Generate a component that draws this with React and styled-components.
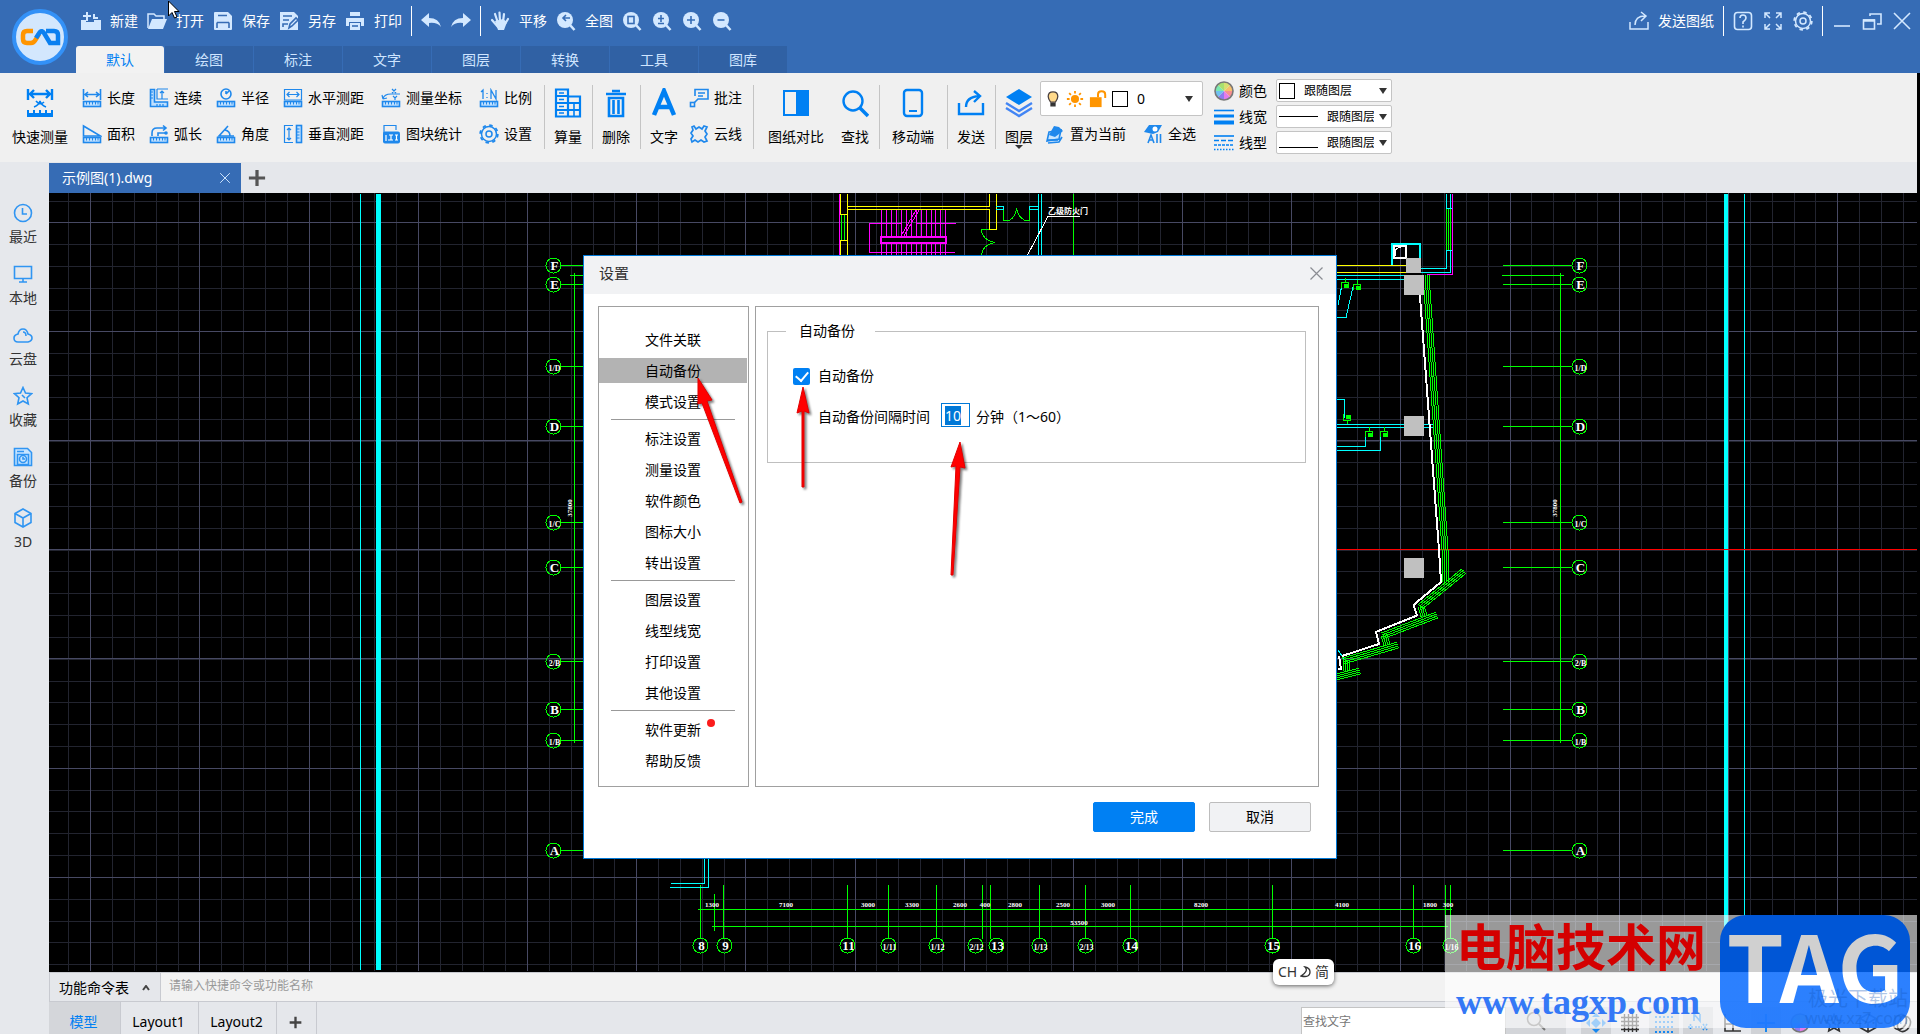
import React, { useEffect, useRef } from "react";
import styled, { createGlobalStyle } from "styled-components";

const GlobalStyle = createGlobalStyle`
  * { box-sizing: border-box; }
  body {
    margin: 0;
    overflow: hidden;
    font-family: "Noto Sans", "Noto Sans CJK SC", sans-serif;
    font-size: 14px;
    line-height: 20px;
    color: #000;
  }
  button, input, select { font: inherit; color: inherit; margin: 0; }
`;

/* ---------- icons ---------- */

const ruler = (
  <>
    <rect x="1.5" y="13.5" width="17" height="5" fill="#bfe0ff" />
    <path d="M4.5 14v2.5M7.5 14v2.5M10.5 14v2.5M13.5 14v2.5M16 14v2.5" strokeWidth="1" />
  </>
);

const lens = <><circle cx="9" cy="9" r="8" fill="currentColor" stroke="none" /><path d="M14 14l4.5 5" strokeWidth="2.6" /></>;

const icons = {
  create: <><path d="M0 9h5v2h8V9h7v10H0z" fill="currentColor" stroke="none" /><path d="M6 1v9M2 5h8M13 3v4h4" strokeWidth="2" /></>,
  open: <><path d="M1 17V3h6l2 2h8v3" strokeWidth="1.5" /><path d="M5 8h15l-4 10H1z" fill="currentColor" stroke="none" /></>,
  save: <><path d="M1 2q0-1 1-1h13l4 4v13q0 1-1 1H2q-1 0-1-1z" fill="currentColor" stroke="none" /><path d="M5 4.5h9M4 11.5h12M4 17v-5.5M16 17v-5.5" stroke="#366cb5" /></>,
  saveAs: <><path d="M1 1h14l4 4v14H1z" fill="currentColor" stroke="none" /><path d="M4 5h9M4 9h6M4 16v-3h5M10 17l1-4 6-6 2 2-6 6z" stroke="#366cb5" /></>,
  print: <><path d="M5 1h10v4H5zM1 7h18v8h-3v-4H4v4H1zM5 12h10v7H5z" fill="currentColor" stroke="none" /><path d="M7 15h6" stroke="#366cb5" /></>,
  undo: <path d="M0 9l8-7v5q10 0 12 9-4-5-12-4v4z" fill="currentColor" stroke="none" />,
  redo: <path d="M20 9l-8-7v5Q2 7 0 16q4-5 12-4v4z" fill="currentColor" stroke="none" />,
  hand: <><path d="M5 10l8-2 4 3-3 8H8z" fill="currentColor" stroke="none" /><path d="M2 9l6 7M5 3l3 9M9.5 1.5l.5 9M14 3l-1 8M18 8l-3 5" strokeWidth="2.2" strokeLinecap="round" /></>,
  full: <>{lens}<path d="M14 7H7M10 4L7 7l3 3" stroke="#366cb5" /></>,
  zoomBox: <>{lens}<rect x="6" y="5.5" width="6" height="7" stroke="#366cb5" /></>,
  zoomFit: <>{lens}<path d="M9 4v7M6 7.5h6M6 12.5h6" stroke="#366cb5" /></>,
  zoomIn: <>{lens}<path d="M9 5v8M5 9h8" stroke="#366cb5" /></>,
  zoomOut: <>{lens}<path d="M5.5 9h7" stroke="#366cb5" /></>,
  share: <path d="M1 11v7h18v-7M6 14q0-9 10-9M12 1l5 4-5 5" strokeWidth="1.5" />,
  help: <><rect x="1.5" y="1.5" width="17" height="17" rx="3" /><path d="M7 7q0-3 3-3t3 3q0 2-3 4v2M10 14.5v2" /></>,
  expand: <path d="M7 2H2v5M2 2l5 5M13 2h5v5M18 2l-5 5M7 18H2v-5M2 18l5-5M13 18h5v-5M18 18l-5-5" strokeWidth="1.5" />,
  gear: <><circle cx="10" cy="10" r="7.5" strokeWidth="1.5" /><circle cx="10" cy="10" r="8.8" strokeWidth="1.8" strokeDasharray="3.45 3.46" /><circle cx="10" cy="10" r="3" strokeWidth="1.5" /></>,
  minimize: <path d="M2 15h16" />,
  restore: <><path d="M1.5 9h11v9h-11z" /><path d="M1 9.5h12" strokeWidth="2.5" /><path d="M8 5V3h11v10h-4" /></>,
  close: <path d="M2 2l16 16M18 2L2 18" />,
  length: <>{ruler}<path d="M1.5 1v11M18.5 1v11M3 6.5h14M6 4L3 6.5 6 9M14 4l3 2.5L14 9" /></>,
  area: <>{ruler}<path d="M1.5 12V2l17 10z" /></>,
  chain: <><path d="M1.5 1.5h4V14h13v4.5h-17z" fill="#bfe0ff" /><path d="M2 4h2M2 7h2M2 10h2M8 16v2M11 16v2M14 16v2M8 1h11M8 1v10h11M13 11V3M11 5l2-2 2 2" strokeWidth="1.2" /></>,
  arc: <>{ruler}<path d="M3 12V9q0-5 5-5h8M14 1.5L17 4l-3 2.5M9 12V9h9" /><circle cx="17" cy="9" r="1" /></>,
  radius: <>{ruler}<circle cx="10" cy="6" r="5" /><path d="M10 6l3-3M10 3v3" /></>,
  angle: <>{ruler}<path d="M18 12H3l9-10M9 6q5 1 5 6" /></>,
  horizontal: <>{ruler}<path d="M1.5 1.5h17V12h-17zM4 6.5h12M6.5 4L4 6.5 6.5 9M13.5 4L16 6.5 13.5 9" strokeWidth="1.2" /></>,
  vertical: <><path d="M10 1.5H1.5v17H10M6 4v12M4 6l2-2 2 2M4 14l2 2 2-2" strokeWidth="1.2" /><rect x="13.5" y="1.5" width="5" height="17" fill="#bfe0ff" /><path d="M14 5h2.5M14 8h2.5M14 11h2.5M14 14h2.5" strokeWidth="1" /></>,
  coord: <>{ruler}<path d="M2 11q1-5 8-5h9M2 11l-1-4M2 11l4-1M11 1l4 4M15 1l-4 4M12 8l2 2 2-2M14 10v2" strokeWidth="1.2" /></>,
  block: <><path d="M3 11V1.5h12V6" strokeWidth="1.2" /><rect x="2" y="7.5" width="17" height="12" rx="2" fill="currentColor" stroke="none" /><path d="M5 11v6M8 11h4M10 11v5M7 16h5M14 11h3M14 16h3M15.5 11v5" stroke="#fff" strokeWidth="1.2" /></>,
  scale: <>{ruler}<path d="M2 4l2-2v9M8 5v1M8 9v1M12 11V2l5 9V2" strokeWidth="1.3" /></>,
  quick: <><path d="M2 1v11M26 1v11M4 6h20M8 2L4 6l4 4M20 2l4 4-4 4" strokeWidth="2.4" /><path d="M8 19q5-2 6-6 1 4 6 6M10 13q4 5 8 1" strokeWidth="1.6" /><path d="M1 29v-7h2v3h4v-3h2v3h4v-3h2v3h4v-3h2v3h4v-3h2v7z" fill="currentColor" stroke="none" /></>,
  table: <><path d="M2 1.5h12v27H2zM14 8.5h12v20H14zM2 8h12M2 15h24M2 22h24M14 8v20" strokeWidth="2.2" /><path d="M5 5h5M5 11.5h5M5 18.5h5M5 25h5M20 15v13" strokeWidth="1.6" /></>,
  trash: <path d="M4 6h20M10 3h8M7 10v18h14V10zM11.5 12v14M16.5 12v14" strokeWidth="2.6" />,
  letter: <path d="M4 27L14 3l10 24M8 19h12" strokeWidth="4.5" />,
  compare: <><path d="M2 3h24v24H2z" strokeWidth="2" /><path d="M14 2h13v26H14z" fill="currentColor" stroke="none" /></>,
  find: <><circle cx="12" cy="13" r="9.5" strokeWidth="2.4" /><path d="M19 20l8 8" strokeWidth="3.6" /></>,
  phone: <><rect x="5" y="2" width="18" height="26" rx="3" strokeWidth="2.4" /><path d="M10 23h8" strokeWidth="2" /></>,
  send: <path d="M2 15v11h24V15M9 19q0-10 13-11M17 3l6 5-6 6" strokeWidth="2.4" />,
  layers: <><path d="M14 1l13 8-13 8L1 9z" fill="currentColor" stroke="none" /><path d="M1 15l13 8 13-8M1 20l13 8 13-8" strokeWidth="2.4" stroke="#4285f4" /></>,
  comment: <><path d="M6 8V1.5h13V11H9l-4 4M9 5h7M9 8h5" /><rect x="1.5" y="14.5" width="4" height="4" /></>,
  cloudLine: <path d="M3 3l2-1 2 3 3-2 3 2 2-3 3 1-2 4 2 3-2 3 2 4-3 1-3-2-3 2-3-2-3 2-1-3 2-3-2-3 2-3z" strokeWidth="1.7" />,
  current: <><path d="M4 8l12-2-2 9-12 2zM3 19l11-1 3-5" fill="#c8e5ff" /><path d="M4 11L9 2l5 1 4 4-8 6z" fill="currentColor" stroke="none" /><path d="M2 16h11" /></>,
  selectAll: <><path d="M6 1h13l-4 7-5 2-9-2z" fill="currentColor" stroke="none" /><circle cx="12" cy="5" r="2.5" fill="#fff" stroke="none" /><path d="M5 19l3-8 3 8M6 16h4M14 10v9M17.500 10v9" /></>,
  clock: <><circle cx="10" cy="10" r="8.5" /><path d="M9.5 5v6H14" /></>,
  monitor: <path d="M1.5 2.5h17v12h-17zM10 15v3M6 18h8" />,
  cloud: <path d="M5 17q-4 0-4-4 0-3 4-4 1-5 5-5t5 5q4 1 4 4t-4 4zM10 7q3 0 3 4" />,
  star: <path d="M10 1.5l2.5 5.5 6 .7-4.5 4 1.3 6.3L10 15l-5.300 3 1.300-6.300-4.500-4 6-.7zM9 9l3 3" />,
  backup: <><path d="M1.5 1.5h13l4 4v13h-17z" fill="#c8e5ff" /><path d="M4 4.5h7M4.5 7.5h11v10h-11z" /><circle cx="10" cy="12" r="3.5" /><path d="M10 10v2h2" /></>,
  cube: <path d="M10 1l8 4.5v9L10 19l-8-4.500v-9zM2 5.5l8 4.5 8-4.500M10 10v9" />,
  bulb: <><path d="M10 1q6 0 6 6 0 3-3 7H7Q4 10 4 7q0-6 6-6z" fill="#ffd98a" stroke="#4a4040" /><path d="M7.5 15.5h5v3h-5z" fill="#333" stroke="#333" /></>,
  sun: <><circle cx="10" cy="10" r="4.5" fill="#ff9500" stroke="none" /><path d="M10 1v3M10 16v3M1 10h3M16 10h3M3.5 3.5l2 2M14.5 14.5l2 2M3.5 16.5l2-2M14.5 5.5l2-2" stroke="#ff9500" strokeWidth="2" /></>,
  unlock: <><path d="M1 8h13v11H1z" fill="#ff9500" stroke="none" /><path d="M10 8V5q0-3.500 4-3.500t4 3.500v4" stroke="#ff9500" strokeWidth="2.2" /></>,
  lineW: <><path d="M0 3.500h20" /><path d="M0 9h20" strokeWidth="3" /><path d="M0 15.500h20" strokeWidth="4" /></>,
  lineT: <><path d="M0 3h20" /><path d="M0 7.500h20" strokeDasharray="5 2" /><path d="M0 12h20" strokeDasharray="3 1" /><path d="M0 16.500h20" strokeDasharray="1.5 1.5" /></>,
  search: <><circle cx="8" cy="8" r="6.5" /><path d="M13 13l6 6" strokeWidth="2" /></>,
  move: <path d="M10 0l4 4H6zM10 20l4-4H6zM0 10l4-4v8zM20 10l-4-4v8zM10 5l5 5-5 5-5-5z" fill="currentColor" stroke="none" />,
  grid: <path d="M4.5 1v18M8.5 1v18M12.5 1v18M16.5 1v18M1 4.5h18M1 8.5h18M1 12.5h18M1 16.5h18" strokeWidth="1.4" />,
  dots: <path d="M1 4h18M1 9h18M1 14h18M1 19h18" strokeDasharray="2 2" strokeWidth="2" />,
  node: <><path d="M6 8V1l6 7V1" /><path d="M0 14h5M2.5 11v6M7 14h7M15 11l4 6M19 11l-4 6" strokeDasharray="2 1" /></>,
  ortho: <path d="M3 1v17h16M3 11h8v7" />,
  plus: <path d="M10 1v18M1 10h18" strokeWidth="2" />,
  plusBold: <path d="M10 1v18M1 10h18" strokeWidth="3.6" />,
  rings: <><ellipse cx="8" cy="9" rx="6" ry="8" transform="rotate(30 8 9)" /><ellipse cx="12" cy="11" rx="6" ry="8" transform="rotate(30 12 11)" /></>,
};

const Glyph = styled.svg`
  display: block;
  flex: none;
  fill: none;
  stroke: currentColor;
  stroke-width: 1.6;
  color: ${({ $color }) => $color || "inherit"};
`;

const Icon = ({ name, w = 20, h = 20, color }) => (
  <Glyph width={w} height={h} viewBox={w === 28 ? "0 0 28 30" : "0 0 20 20"} $color={color} aria-hidden="true">
    {icons[name]}
  </Glyph>
);

const ColorWheel = () => {
  const colors = ["#f8c06c", "#f78f8f", "#e57bea", "#8f7bf0", "#6fc0f0", "#7be8b0", "#a8e070", "#d8e070"];
  return (
    <Glyph width="20" height="20" viewBox="-10 -10 20 20" aria-hidden="true">
      {colors.map((c, i) => (
        <path key={c} d="M0 0L9 0A9 9 0 0 1 6.360 6.360Z" fill={c} stroke="none" transform={`rotate(${i * 45 - 45})`} />
      ))}
      <circle r="9" stroke="#777" />
    </Glyph>
  );
};

/* ---------- page ---------- */

const Page = styled.div`
  position: relative;
  display: flex;
  flex-direction: column;
  height: 100vh;
  overflow: hidden;
  background: #e5e7eb;
`;

const PlainButton = styled.button`
  display: flex;
  align-items: center;
  padding: 0;
  border: 0;
  background: none;
  white-space: nowrap;
  cursor: pointer;
`;

const Header = styled.header`
  display: flex;
  flex: none;
  height: 73px;
  background: #366cb5;
  color: #fff;
`;

const Logo = styled.div`
  width: 76px;
  padding: 9px 0 0 12px;
`;

const HeaderMain = styled.div`
  flex: 1;
  display: flex;
  flex-direction: column;
  justify-content: space-between;
`;

const QuickBar = styled.div`
  display: flex;
  align-items: center;
  gap: 9px;
  height: 42px;
  padding: 0 8px 0 5px;
`;

const QuickGroup = styled.div`
  display: flex;
  align-items: center;
  gap: ${({ $gap }) => $gap}px;
  margin-left: ${({ $end }) => ($end ? "auto" : "0")};
  color: #d3e8ff;
`;

const QuickButton = styled(PlainButton)`
  gap: 9px;
  span { color: #fff; }
`;

const BarLine = styled.i`
  width: 1px;
  height: 30px;
  background: #fff;
`;

const MenuTabs = styled.nav`
  display: flex;
  gap: 1px;
`;

const MenuTab = styled(PlainButton)`
  justify-content: center;
  width: 88px;
  height: 27px;
  border-radius: ${({ $active }) => ($active ? "3px 3px 0 0" : "0")};
  background: ${({ $active }) => ($active ? "#f2f2f2" : "#3061a4")};
  color: ${({ $active }) => ($active ? "#0080f3" : "#cfe5ff")};
`;

const Ribbon = styled.div`
  display: flex;
  flex: none;
  align-items: flex-start;
  height: 89px;
  border-right: 3px solid #000;
  background: #f0f0f0;
`;

const RibbonGroup = styled.div`
  display: flex;
  flex: none;
  gap: ${({ $gap }) => $gap || 14}px;
  height: 64px;
  margin-top: 12px;
  padding: 3px ${({ $right }) => $right || 10}px 0 ${({ $left }) => $left || 9}px;
  border-right: 1px solid ${({ $last }) => ($last ? "transparent" : "#c4c4c4")};
`;

const BigButton = styled(PlainButton)`
  flex-direction: column;
  justify-content: flex-start;
  gap: 9px;
  svg { color: #0080f3; }
`;

const Caret = styled.i`
  flex: none;
  border: 4px solid transparent;
  border-top: 6px solid #333;
  border-bottom: 0;
`;

const BigCaret = styled(Caret)`
  margin-top: -11px;
  border-top-width: 4px;
`;

const ToolPair = styled.div`
  display: flex;
  flex-direction: column;
  gap: 16px;
  margin-left: ${({ $spaced }) => ($spaced ? 3 : 0)}px;
`;

const ToolButton = styled(PlainButton)`
  gap: 5px;
  height: 20px;
  svg { color: #1f88ec; }
`;

const LayerColumn = styled.div`
  display: flex;
  flex-direction: column;
  gap: 8px;
  margin: 8px 11px 0 -4px;
`;

const LayerTools = styled.div`
  display: flex;
  gap: 17px;
  padding-left: 5px;
`;

const SelectBox = styled.label`
  display: flex;
  align-items: center;
  gap: 5px;
  width: ${({ $large }) => ($large ? 163 : 116)}px;
  height: ${({ $large }) => ($large ? 35 : 23)}px;
  padding: 0 ${({ $large }) => ($large ? 9 : 4)}px 0 ${({ $large }) => ($large ? 4 : 2)}px;
  border: 1px solid #c4c4c4;
  border-radius: 2px;
  background: #fff;
  font-size: ${({ $large }) => ($large ? 14 : 12)}px;

  select {
    flex: 1;
    min-width: 0;
    padding: 0 0 0 4px;
    border: 0;
    outline: 0;
    background: none;
    appearance: none;
  }
`;

const Swatch = styled.i`
  width: 16px;
  height: 16px;
  border: 1px solid #000;
  background: #fff;
`;

const LineSample = styled.i`
  width: 39px;
  height: 1px;
  margin-top: ${({ $low }) => ($low ? 9 : 0)}px;
  background: #000;
`;

const StyleColumn = styled.div`
  display: grid;
  grid-template-columns: 20px 28px 116px;
  align-items: center;
  gap: 3px 5px;
  margin-top: 6px;
  color: #000;

  svg { color: #0080f3; }
  ${SelectBox} { margin-left: 4px; }
`;

const Body = styled.div`
  display: flex;
  flex: 1;
  min-height: 0;
`;

const Sidebar = styled.nav`
  display: flex;
  flex: none;
  flex-direction: column;
  gap: 17px;
  width: 49px;
  padding: 41px 3px 0 0;
  background: #e6e8ec;
`;

const SideButton = styled(PlainButton)`
  flex-direction: column;
  gap: 4px;
  color: #333;
  svg { color: #3095f2; }
`;

const Main = styled.main`
  display: flex;
  flex: 1;
  flex-direction: column;
  min-width: 0;
  border-right: 3px solid #000;
`;

const FileTabs = styled.div`
  display: flex;
  flex: none;
  align-items: flex-end;
  height: 31px;
`;

const FileTab = styled.div`
  display: flex;
  align-items: center;
  justify-content: space-between;
  width: 192px;
  height: 30px;
  padding: 0 10px 0 13px;
  background: #366cb5;
  color: #fff;
`;

const AddButton = styled(PlainButton)`
  height: 30px;
  padding-left: 7px;
  color: #555;
`;

const Canvas = styled.svg`
  display: block;
  flex: 1;
  width: 100%;
  min-height: 0;
  background: #000;
  fill: none;
  stroke-width: 1;
  shape-rendering: crispEdges;

  text {
    fill: #fff;
    font-family: "Liberation Serif", "Noto Sans CJK SC", serif;
    font-weight: 700;
    text-anchor: middle;
  }
`;

const CommandRow = styled.div`
  display: flex;
  flex: none;
  height: 30px;
  border: 1px solid #c8cad0;
  border-right: 0;
  background: #f2f2f2;

  input {
    flex: 1;
    height: 24px;
    padding: 0 8px;
    border: 0;
    background: none;
    font-size: 12px;
  }
  input::placeholder { color: #999; }
`;

const CommandButton = styled(PlainButton)`
  justify-content: space-between;
  width: 111px;
  padding: 1px 10px 0 9px;
  border-right: 1px solid #c8cad0;
  background: #e5e7eb;
`;

const StatusRow = styled.div`
  display: flex;
  flex: none;
  height: 32px;
  background: #e5e7eb;
`;

const SheetTab = styled(PlainButton)`
  justify-content: center;
  width: ${({ $w }) => $w}px;
  padding: 8px 2px 0 0;
  border-right: 1px solid #c8cad0;
  background: ${({ $active }) => ($active ? "#d4d6da" : "none")};
  color: ${({ $active }) => ($active ? "#0080f3" : "#000")};
`;

const FindBox = styled.input`
  width: 205px;
  height: 27px;
  margin: 5px 0 0 auto;
  padding: 0 1px;
  border: 1px solid #c4c4c4;
  border-bottom: 0;
  background: #fff;
  font-size: 12px;
  &::placeholder { color: #777; }
`;

const FindButton = styled(PlainButton)`
  justify-content: center;
  width: 60px;
  height: 27px;
  margin: 5px 15px 0 0;
  background: #d3d5d9;
  color: #777;
`;

const StatusTools = styled.div`
  display: flex;
  gap: 4px;
  padding-top: 5px;
`;

const StatusButton = styled(PlainButton)`
  justify-content: center;
  width: 30px;
  height: 27px;
  padding-top: 4px;
  background: ${({ $on }) => ($on ? "#d0d2d6" : "none")};
  color: ${({ $blue }) => ($blue ? "#1687f0" : "#333")};
`;

/* ---------- dialog ---------- */

const DialogLayer = styled.div`
  position: absolute;
  inset: 0;
  display: flex;
  align-items: center;
  justify-content: center;
  padding-top: 80px;
`;

const Dialog = styled.section`
  position: relative;
  width: 754px;
  border: 1px solid #0078d7;
  background: #fff;
`;

const DialogTitle = styled.header`
  display: flex;
  align-items: center;
  justify-content: space-between;
  height: 38px;
  padding: 0 12px 4px 15px;
  background: #f1f2f4;
  color: #333;

  h1 { margin: 0; font-size: 15px; font-weight: 400; }
  button { color: #8a8c92; }
`;

const DialogBody = styled.div`
  display: flex;
  gap: 6px;
  padding: 12px 17px 0 14px;
`;

const DialogNav = styled.nav`
  display: flex;
  flex: none;
  flex-direction: column;
  gap: 6px;
  width: 151px;
  padding: 20px 1px 13px 0;
  border: 1px solid #a0a0a0;

  hr {
    width: 124px;
    margin: -1px auto 0;
    border: 0;
    border-top: 1px solid #999;
  }
`;

const NavButton = styled(PlainButton)`
  justify-content: center;
  height: 25px;
  background: ${({ $active }) => ($active ? "#b3b3b3" : "none")};
`;

const NavLabel = styled.span`
  position: relative;
`;

const RedDot = styled.i`
  position: absolute;
  top: -1px;
  right: -14px;
  width: 8px;
  height: 8px;
  border-radius: 50%;
  background: #fb1c1c;
`;

const DialogContent = styled.div`
  flex: 1;
  padding: 14px 12px 0 11px;
  border: 1px solid #a0a0a0;
`;

const FieldGroup = styled.fieldset`
  margin: 0;
  padding: 25px 18px 35px;
  border: 1px solid #bfbfbf;

  legend { padding: 0 20px 0 13px; }
`;

const FieldRow = styled.div`
  display: flex;
  align-items: center;
  gap: 8px;
  margin-left: 7px;
`;

const IntervalRow = styled.div`
  display: flex;
  align-items: flex-end;
  margin: 17px 0 0 32px;
`;

const CheckBox = styled.input`
  display: flex;
  align-items: center;
  justify-content: center;
  width: 17px;
  height: 17px;
  border-radius: 2px;
  background: #0080f3;
  appearance: none;

  &::after {
    content: "";
    width: 6px;
    height: 10px;
    margin-bottom: 3px;
    border: solid #fff;
    border-width: 0 2px 2px 0;
    transform: rotate(40deg);
  }
`;

const MinuteInput = styled.input`
  width: 29px;
  height: 24px;
  margin: 0 6px 0 11px !important;
  padding: 0 3px;
  border: 1px solid #0078d7;
  outline: 0;
  &::selection { background: #0078d7; color: #fff; }
`;

const DialogFooter = styled.footer`
  display: flex;
  justify-content: flex-end;
  gap: 14px;
  padding: 15px 25px 26px;
`;

const ActionButton = styled.button`
  width: 102px;
  height: 30px;
  padding: 0;
  border: 1px solid ${({ $primary }) => ($primary ? "#0080f3" : "#bdbdbd")};
  border-radius: 2px;
  background: ${({ $primary }) => ($primary ? "#0080f3" : "#f1f2f4")};
  color: ${({ $primary }) => ($primary ? "#fff" : "#000")};
`;

const Arrows = styled.svg`
  position: absolute;
  top: -1px;
  left: -1px;
  pointer-events: none;
  filter: drop-shadow(2px 2px 1px rgba(0, 0, 0, 0.5));
`;

/* ---------- things floating over the page ---------- */

const Ime = styled.div`
  position: absolute;
  right: 586px;
  bottom: 49px;
  display: flex;
  align-items: center;
  justify-content: center;
  gap: 3px;
  width: 61px;
  height: 26px;
  border-radius: 6px;
  background: #fff;
  box-shadow: 0 1px 4px rgba(0, 0, 0, 0.6);
  color: #333;
`;

const Cursor = styled.svg`
  position: absolute;
  top: 0;
  left: 168px;
`;

const Banner = styled.div`
  position: absolute;
  right: 3px;
  bottom: 6px;
  display: flex;
  justify-content: space-between;
  width: 472px;
  height: 113px;
  padding: 0 7px 0 11px;
  background: rgba(255, 255, 255, 0.6);
`;

const BannerTitle = styled.div`
  color: #d40000;
  font-size: 50px;
  font-weight: 700;
  line-height: 64px;
`;

const BannerUrl = styled.div`
  color: #3478f6;
  font-family: "Liberation Serif", serif;
  font-size: 36px;
  font-weight: 700;
  line-height: 46px;
`;

const Tag = styled.div`
  position: relative;
  width: 190px;
  height: 113px;
  border-radius: 26px;
  background: linear-gradient(#0056d6 57px, rgba(10, 108, 255, 0.86) 57px);
  text-align: center;
`;

const TagText = styled.div`
  background: linear-gradient(#d0d0d0 57px, #fff 57px);
  background-clip: text;
  color: transparent;
  font-family: "Noto Sans CJK SC", sans-serif;
  font-size: 92px;
  font-weight: 700;
  line-height: 96px;
`;

const TagNote = styled.div`
  position: absolute;
  right: 2px;
  bottom: 2px;
  color: rgba(20, 90, 190, 0.35);
  font-size: 20px;
  line-height: 22px;
  text-align: right;

  small { display: block; font-size: 16px; line-height: 16px; }
`;

/* ---------- drawing ---------- */

const steps = (from, pitch, count) => Array.from({ length: count }, (_, i) => from + pitch * i);

const Grid = () => (
  <>
    <path
      stroke="#22242f"
      d={steps(68.46, 21.836, 260).map((x) => `M${Math.round(x) + 0.5} 193V971`).join("") +
        steps(200.5, 21.82, 36).map((y) => `M49 ${Math.round(y) + 0.5}H5000`).join("")}
    />
    <path
      stroke="#474963"
      d={steps(90.3, 109.18, 50).map((x) => `M${Math.round(x) + 0.5} 193V971`).join("") +
        steps(222, 109.1, 7).map((y) => `M49 ${Math.round(y) + 0.5}H5000`).join("")}
    />
  </>
);

// parallel lines on both sides of a segment
const Band = ({ from, to, count = 4, gap = 2 }) => {
  const [x1, y1] = from;
  const [x2, y2] = to;
  const len = Math.hypot(x2 - x1, y2 - y1);
  const nx = -(y2 - y1) / len;
  const ny = (x2 - x1) / len;
  return steps((-(count - 1) * gap) / 2, gap, count).map((o) => (
    <line key={o} x1={x1 + nx * o} y1={y1 + ny * o} x2={x2 + nx * o} y2={y2 + ny * o} />
  ));
};

const axes = [
  ["F", 265], ["E", 284], ["1/D", 366], ["D", 426], ["1/C", 522],
  ["C", 567], ["2/B", 661], ["B", 709], ["1/B", 740], ["A", 850],
];

const columns = [
  ["8", 700], ["9", 724], ["11", 847], ["1/11", 888], ["1/12", 936], ["2/12", 975], ["13", 996],
  ["1/13", 1039], ["2/13", 1085], ["14", 1130], ["15", 1272], ["16", 1413], ["1/16", 1450],
];

const spans = [
  ["1300", 712], ["7100", 786], ["3000", 868], ["3300", 912], ["2600", 960], ["400", 985], ["2800", 1015],
  ["2500", 1063], ["3000", 1108], ["8200", 1201], ["4100", 1342], ["1800", 1430], ["300", 1448],
];

const Bubble = ({ x, y, label }) => (
  <>
    <circle cx={x} cy={y} r="7.5" stroke="#0f0" />
    <text x={x + 1} y={y + 4} fontSize={label.length > 2 ? 8 : 13}>{label}</text>
  </>
);

const Tap = ({ x, y, flip }) => (
  <g stroke="#0f0" transform={`translate(${x} ${y}) scale(1 ${flip ? -1 : 1})`}>
    <path d="M0 0v4M-4 10V4h7v5h-2" />
    <rect x="-1" y="6" width="3" height="3" fill="#0f0" />
  </g>
);

const Drawing = () => (
  <Canvas role="img" aria-label="示例图">
    <g transform="translate(-49 -193)">
      <Grid />
      <g fill="#0ff">
        <rect x="360" y="194" width="1" height="776" />
        <rect x="376" y="194" width="5" height="776" />
        <rect x="1724" y="194" width="4" height="776" />
        <rect x="1744" y="194" width="1" height="776" />
      </g>
      <path d="M960 549.5H5000" stroke="#f00" />

      {/* axes on both sides */}
      {axes.map(([label, y]) => (
        <g key={label}>
          <path d={`M561 ${y + 0.5}H590M1503 ${y + 0.5}H1571`} stroke="#0f0" />
          <Bubble x={553.5} y={y + 0.5} label={label} />
          <Bubble x={1579.5} y={y + 0.5} label={label} />
        </g>
      ))}
      <path d="M574.5 273V743M570 275.5H590M1560.5 273V743M1502 275.5H1564" stroke="#0f0" />
      <text fontSize="7" transform="translate(572 508) rotate(-90)">37800</text>
      <text fontSize="7" transform="translate(1557 508) rotate(-90)">37800</text>

      {/* bottom axes */}
      <path
        stroke="#0f0"
        d={[700, 723, 847, 888, 936, 982, 990, 1039, 1085, 1130, 1272, 1413, 1445, 1450].map((x) => `M${x + 0.5} 885V939`).join("") +
          "M714.5 894V931M698 909.5H1452M712 926.5H1448"}
      />
      {columns.map(([label, x]) => <Bubble key={label} x={x + 0.5} y={945.5} label={label} />)}
      {spans.map(([label, x]) => <text key={x} x={x} y="907" fontSize="7">{label}</text>)}
      <text x="1079" y="925" fontSize="7">53500</text>
      <path d="M704.5 858V883.5H671M708.5 858V887.5H670" stroke="#0ff" />

      {/* stairs and walls above */}
      <path d="M839.5 194V256" stroke="#f0f" />
      <path
        stroke="#ff0"
        d="M840.5 194V214.5H847.5M840.5 256V240.5H847.5M847.5 194V256M847.5 206.5H989.5V194M847.5 209.5H989.5V229.5H996.5V194"
      />
      <path
        stroke="#0f0"
        d="M841.5 215V240M844.5 215V240M1073.5 194V256M1003.5 210V220.5H1009Q1016 217 1016.5 208Q1018 217 1025 220.5H1029.5V210M989 229.5H981.5Q982 240 995 242.5Q982 245 981.5 256"
      />
      <path d="M996 206.5H1003.5V209.5H996M1038 206.5H1029.5V209.5H1038M1038.5 194V256M1041.5 194V256" stroke="#0ff" />
      <g stroke="#f0f">
        {steps(881.5, 4.95, 14).map((x) => <path key={x} d={`M${x} 210V236M${x} 244V256`} />)}
        <path d="M901 223.5H869.5V252.5H955M917 223.5H956M901 236L916 210M904 236L919 210" />
        <rect x="881" y="237" width="65" height="6" fill="#000" strokeWidth="2" />
      </g>
      <path d="M1080 216.5H1048L1027 256" stroke="#fff" />
      <text x="1068" y="214" fontSize="8">乙级防火门</text>

      {/* right wing */}
      <path d="M1336 265.5H1406M1336 272.5H1406" stroke="#ff0" />
      <path
        stroke="#0ff"
        d="M1336 275.5H1404M1336 279.5H1404M1420 268.5H1446.5V250.5H1452M1420 272.5H1450.5V250M1446.5 194V208.5H1452M1450.5 194V208M1341.5 287L1338 305M1353 287L1346 317.5H1336M1336 399.5H1344.5V418M1336 424.5H1404M1336 427.5H1404M1424 424.5H1434M1424 427.5H1434M1365.5 434V446.5H1336M1380.5 434V450.5H1336M1338 650L1344 659"
      />
      <path d="M1392 265V244H1420V258" stroke="#0ff" strokeWidth="2" />
      <path d="M1446.5 209V250M1448.5 209V250M1450.5 209V250" stroke="#0f0" />
      <path d="M1452.5 194V274.5H1427" stroke="#f0f" />
      <rect x="1394" y="246" width="12" height="12" stroke="#fff" strokeWidth="2" />
      <path d="M1395.5 256V251Q1396 247.5 1401 247.5" stroke="#fff" />
      <Tap x={1345.5} y={278} />
      <Tap x={1357.5} y={280} />
      <Tap x={1347.5} y={424} flip />
      <Tap x={1369.5} y={427} />
      <Tap x={1384.5} y={427} />
      <g stroke="#0f0">
        <Band from={[1426, 275]} to={[1445, 550]} />
        <Band from={[1445, 550]} to={[1446, 582]} />
        <Band from={[1464, 571]} to={[1420, 607]} />
        <Band from={[1421, 606]} to={[1424, 616]} />
        <Band from={[1437, 615]} to={[1382, 636]} />
        <Band from={[1384, 635]} to={[1387, 645]} />
        <Band from={[1398, 645]} to={[1343, 661]} />
        <Band from={[1346, 660]} to={[1347, 671]} />
        <Band from={[1360, 671]} to={[1336, 677]} />
      </g>
      <path
        d="M1419.5 290L1439 550L1441 582L1413.5 605L1417 615.5L1376 632L1379 644L1342 656M1339 656L1341 669H1338"
        stroke="#fff"
        strokeWidth="2"
      />
      <g fill="#c0c0c0">
        <rect x="1406" y="258" width="15" height="15" />
        <rect x="1404" y="275" width="20" height="20" />
        <rect x="1404" y="416" width="20" height="20" />
        <rect x="1404" y="558" width="20" height="20" />
      </g>
    </g>
  </Canvas>
);

/* ---------- parts ---------- */

const menuTabs = ["默认", "绘图", "标注", "文字", "图层", "转换", "工具", "图库"];

const measureTools = [
  [["length", "长度"], ["area", "面积"]],
  [["chain", "连续"], ["arc", "弧长"]],
  [["radius", "半径"], ["angle", "角度"]],
  [["horizontal", "水平测距"], ["vertical", "垂直测距"]],
  [["coord", "测量坐标"], ["block", "图块统计"]],
  [["scale", "比例"], ["gear", "设置"]],
];

const sideItems = [
  ["clock", "最近"], ["monitor", "本地"], ["cloud", "云盘"], ["star", "收藏"], ["backup", "备份"], ["cube", "3D"],
];

const navGroups = [
  ["文件关联", "自动备份", "模式设置"],
  ["标注设置", "测量设置", "软件颜色", "图标大小", "转出设置"],
  ["图层设置", "线型线宽", "打印设置", "其他设置"],
  ["软件更新", "帮助反馈"],
];

const Quick = ({ icon, label, title }) => (
  <QuickButton aria-label={title}>
    <Icon name={icon} />
    {label && <span>{label}</span>}
  </QuickButton>
);

const Big = ({ icon, label, children }) => (
  <BigButton><Icon name={icon} w={28} h={30} /><span>{label}</span>{children}</BigButton>
);

const Tool = ({ icon, label }) => (
  <ToolButton><Icon name={icon} />{label}</ToolButton>
);

const TopBar = () => (
  <Header>
    <Logo>
      <svg width="56" height="56" viewBox="0 0 56 56" fill="none" strokeWidth="4.5">
        <circle cx="28" cy="28" r="26" fill="#d3e7fd" stroke="#3391f7" strokeWidth="4" />
        <path d="M21 22h-6q-4 0-4 4v4q0 4 4 4h4q3 0 5-4l3-5" stroke="#ff9500" />
        <path d="M24 29l4-6q2-2 4 1l6 10h8V26q0-4-4-4h-8" stroke="#0b80f0" />
      </svg>
    </Logo>
    <HeaderMain>
      <QuickBar>
        <QuickGroup $gap={9}>
          <Quick icon="create" label="新建" />
          <Quick icon="open" label="打开" />
          <Quick icon="save" label="保存" />
          <Quick icon="saveAs" label="另存" />
          <Quick icon="print" label="打印" />
        </QuickGroup>
        <BarLine />
        <QuickGroup $gap={10}>
          <Quick icon="undo" title="撤销" />
          <Quick icon="redo" title="重做" />
        </QuickGroup>
        <BarLine />
        <QuickGroup $gap={9}>
          <Quick icon="hand" label="平移" />
          <Quick icon="full" label="全图" />
        </QuickGroup>
        <QuickGroup $gap={10}>
          <Quick icon="zoomBox" title="窗口缩放" />
          <Quick icon="zoomFit" title="缩放" />
          <Quick icon="zoomIn" title="放大" />
          <Quick icon="zoomOut" title="缩小" />
        </QuickGroup>
        <QuickGroup $gap={9} $end>
          <Quick icon="share" label="发送图纸" />
        </QuickGroup>
        <BarLine />
        <QuickGroup $gap={10}>
          <Quick icon="help" title="帮助" />
          <Quick icon="expand" title="全屏" />
          <Quick icon="gear" title="设置" />
        </QuickGroup>
        <BarLine />
        <QuickGroup $gap={10}>
          <Quick icon="minimize" title="最小化" />
          <Quick icon="restore" title="还原" />
          <Quick icon="close" title="关闭" />
        </QuickGroup>
      </QuickBar>
      <MenuTabs>
        {menuTabs.map((t, i) => <MenuTab key={t} $active={i === 0}>{t}</MenuTab>)}
      </MenuTabs>
    </HeaderMain>
  </Header>
);

const ToolRibbon = () => (
  <Ribbon>
    <RibbonGroup $left={12} $right={12}>
      <Big icon="quick" label="快速测量" />
      {measureTools.map((pair, i) => (
        <ToolPair key={i} $spaced={i > 3}>
          {pair.map(([icon, label]) => <Tool key={label} icon={icon} label={label} />)}
        </ToolPair>
      ))}
    </RibbonGroup>
    <RibbonGroup><Big icon="table" label="算量" /></RibbonGroup>
    <RibbonGroup><Big icon="trash" label="删除" /></RibbonGroup>
    <RibbonGroup $gap={11} $right={11}>
      <Big icon="letter" label="文字" />
      <ToolPair>
        <Tool icon="comment" label="批注" />
        <Tool icon="cloudLine" label="云线" />
      </ToolPair>
    </RibbonGroup>
    <RibbonGroup $left={14} $gap={17}>
      <Big icon="compare" label="图纸对比" />
      <Big icon="find" label="查找" />
    </RibbonGroup>
    <RibbonGroup $left={12} $right={13}><Big icon="phone" label="移动端" /></RibbonGroup>
    <RibbonGroup><Big icon="send" label="发送" /></RibbonGroup>
    <RibbonGroup $last><Big icon="layers" label="图层"><BigCaret /></Big></RibbonGroup>
    <LayerColumn>
      <SelectBox $large>
        <Icon name="bulb" w={16} />
        <Icon name="sun" w={18} />
        <Icon name="unlock" w={18} />
        <Swatch />
        <select aria-label="图层"><option>0</option></select>
        <Caret />
      </SelectBox>
      <LayerTools>
        <Tool icon="current" label="置为当前" />
        <Tool icon="selectAll" label="全选" />
      </LayerTools>
    </LayerColumn>
    <StyleColumn>
      <ColorWheel />
      <label htmlFor="color">颜色</label>
      <SelectBox as="div">
        <Swatch />
        <select id="color"><option>跟随图层</option></select>
        <Caret />
      </SelectBox>
      <Icon name="lineW" />
      <label htmlFor="weight">线宽</label>
      <SelectBox as="div">
        <LineSample />
        <select id="weight"><option>跟随图层</option></select>
        <Caret />
      </SelectBox>
      <Icon name="lineT" />
      <label htmlFor="type">线型</label>
      <SelectBox as="div">
        <LineSample $low />
        <select id="type"><option>跟随图层</option></select>
        <Caret />
      </SelectBox>
    </StyleColumn>
  </Ribbon>
);

const StatusBar = () => (
  <>
    <CommandRow>
      <CommandButton>
        功能命令表
        <svg width="8" height="6" viewBox="0 0 8 6" fill="none" stroke="#444" strokeWidth="2"><path d="M1 5l3-4 3 4" /></svg>
      </CommandButton>
      <input aria-label="命令" placeholder="请输入快捷命令或功能名称" />
    </CommandRow>
    <StatusRow>
      <SheetTab $w={72} $active>模型</SheetTab>
      <SheetTab $w={78}>Layout1</SheetTab>
      <SheetTab $w={78}>Layout2</SheetTab>
      <SheetTab $w={40} aria-label="新建布局"><Icon name="plusBold" w={13} h={13} color="#444" /></SheetTab>
      <FindBox aria-label="查找文字" placeholder="查找文字" />
      <FindButton aria-label="查找"><Icon name="search" /></FindButton>
      <StatusTools>
        <StatusButton $on $blue aria-label="移动"><Icon name="move" /></StatusButton>
        <StatusButton aria-label="栅格"><Icon name="grid" /></StatusButton>
        <StatusButton $on $blue aria-label="捕捉"><Icon name="dots" /></StatusButton>
        <StatusButton $on $blue aria-label="节点"><Icon name="node" /></StatusButton>
        <StatusButton aria-label="正交"><Icon name="ortho" /></StatusButton>
        <StatusButton $on $blue aria-label="十字光标"><Icon name="plus" /></StatusButton>
        <StatusButton aria-label="颜色"><ColorWheel /></StatusButton>
        <StatusButton aria-label="收藏"><Icon name="star" /></StatusButton>
        <StatusButton aria-label="三维"><Icon name="cube" /></StatusButton>
        <StatusButton aria-label="更多"><Icon name="rings" /></StatusButton>
      </StatusTools>
    </StatusRow>
  </>
);

const SettingsDialog = () => {
  const minutes = useRef(null);

  useEffect(() => {
    minutes.current.focus();
    minutes.current.select();
  }, []);

  return (
    <DialogLayer>
      <Dialog role="dialog" aria-labelledby="dialog-title">
        <DialogTitle>
          <h1 id="dialog-title">设置</h1>
          <PlainButton aria-label="关闭"><Icon name="close" w={15} h={15} /></PlainButton>
        </DialogTitle>
        <DialogBody>
          <DialogNav>
            {navGroups.map((group, g) => (
              <React.Fragment key={g}>
                {g > 0 && <hr />}
                {group.map((item) => (
                  <NavButton key={item} $active={item === "自动备份"}>
                    <NavLabel>{item}{item === "软件更新" && <RedDot />}</NavLabel>
                  </NavButton>
                ))}
              </React.Fragment>
            ))}
          </DialogNav>
          <DialogContent>
            <FieldGroup>
              <legend>自动备份</legend>
              <FieldRow>
                <CheckBox type="checkbox" id="backup" defaultChecked />
                <label htmlFor="backup">自动备份</label>
              </FieldRow>
              <IntervalRow>
                <label htmlFor="minutes">自动备份间隔时间</label>
                <MinuteInput id="minutes" ref={minutes} defaultValue="10" />
                <span>分钟（1～60）</span>
              </IntervalRow>
            </FieldGroup>
          </DialogContent>
        </DialogBody>
        <DialogFooter>
          <ActionButton $primary>完成</ActionButton>
          <ActionButton>取消</ActionButton>
        </DialogFooter>
        <Arrows width="754" height="400" fill="#f00" stroke="#e00000" strokeWidth="1">
          <path d="M115 123l14 22-5 1 35 101-2 1-38-100-4 1z" />
          <path d="M220 132l6 26-5-2v76h-2v-76l-5 2z" />
          <path d="M377 187l5 26-5-1-7 108h-2l5-109-5 1z" />
        </Arrows>
      </Dialog>
    </DialogLayer>
  );
};

const App = () => {
  return (
    <Page>
      <GlobalStyle />
      <TopBar />
      <ToolRibbon />
      <Body>
        <Sidebar>
          {sideItems.map(([icon, label]) => (
            <SideButton key={label}><Icon name={icon} />{label}</SideButton>
          ))}
        </Sidebar>
        <Main>
          <FileTabs>
            <FileTab>
              示例图(1).dwg
              <PlainButton aria-label="关闭图纸"><Icon name="close" w={12} h={12} color="#d3e8ff" /></PlainButton>
            </FileTab>
            <AddButton aria-label="打开图纸"><Icon name="plusBold" w={18} h={18} /></AddButton>
          </FileTabs>
          <Drawing />
          <StatusBar />
        </Main>
      </Body>
      <SettingsDialog />
      <Ime>
        CH
        <svg width="12" height="12" viewBox="0 0 12 12" fill="none" stroke="#333" strokeWidth="1.3"><path d="M5 1q4 4-4 9 9 2 9-4 0-4-5-5z" /></svg>
        简
      </Ime>
      <Banner>
        <div>
          <BannerTitle>电脑技术网</BannerTitle>
          <BannerUrl>www.tagxp.com</BannerUrl>
        </div>
        <Tag>
          <TagText>TAG</TagText>
          <TagNote>极光下载站<small>www.xz7.com</small></TagNote>
        </Tag>
      </Banner>
      <Cursor width="12" height="19" viewBox="0 0 12 19" fill="#fff" stroke="#000">
        <path d="M.5 1v15l3.500-3.500 2.500 5.500 2.500-1-2.500-5.500H11z" />
      </Cursor>
    </Page>
  );
};

export default App;
